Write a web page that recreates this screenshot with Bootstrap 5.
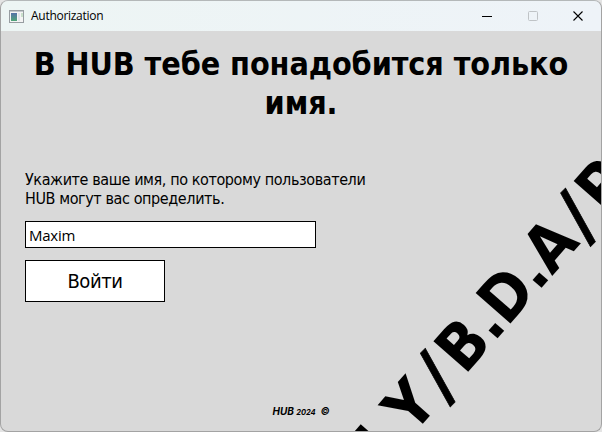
<!DOCTYPE html>
<html lang="ru">
<head>
<meta charset="utf-8">
<meta name="viewport" content="width=device-width, initial-scale=1">
<title>Authorization</title>
<link href="https://cdn.jsdelivr.net/npm/bootstrap@5.3.0/dist/css/bootstrap.min.css" rel="stylesheet">
<style>
html, body { height: 100%; }
body { background: #e4e4e4; color: #000; font-family: "DejaVu Sans Condensed", "DejaVu Sans", sans-serif; font-stretch: condensed; }
.app-window { height: 432px; border: 1px solid #a3a3a3; border-top-color: #b4b8b9; border-radius: 8px; background: #d9d9d9; }
.titlebar { height: 30px; background: linear-gradient(90deg, #edf5f4, #eef3f8); font: 12px/30px "Open Sans", sans-serif; padding-left: 8px; }
.titlebar .caption { margin-left: 7px; letter-spacing: -.28px; }
.win-btn { width: 45.5px; height: 30px; }
.headline { font-size: 32px; line-height: 39px; letter-spacing: -.08px; padding-top: 14px; }
.login { padding: 47px 0 0 24px; }
.hint { font-size: 16px; line-height: 19px; letter-spacing: -.4px; }
.name-field { width: 291px; height: 27px; margin-top: 13px; border: 1px solid #000; border-radius: 0; padding: 0 3px; color: #000; background: #fff; font: 15px/25px "Open Sans", sans-serif; letter-spacing: -.25px; }
.enter-btn { width: 140px; height: 42px; margin-top: 12px; border: 1px solid #000; border-radius: 0; background: #fff; color: #000; font-size: 20px; line-height: 40px; letter-spacing: -.4px; padding: 0; }
.footline { font: italic bold 10px/12px Inter, sans-serif; bottom: 12px; }
.footline .year { font-size: 7.5px; }
.watermark { font-weight: bold; font-size: 63.5px; }
.watermark .slash { font-size: 72px; stroke: #000; stroke-width: .6px; }
</style>
<script src="https://cdn.jsdelivr.net/npm/bootstrap@5.3.0/dist/js/bootstrap.bundle.min.js"></script>
</head>
<body class="m-0 overflow-hidden">
<div class="app-window position-relative overflow-hidden">
  <svg class="watermark position-absolute top-0 start-0" width="600" height="430" viewBox="1 1 600 430" aria-hidden="true">
    <g transform="translate(468.3 371.7) rotate(-48.8)">
      <text><tspan x="-153 -84.5">NY</tspan><tspan class="slash" x="-38" y="3" rotate="4">/</tspan><tspan y="0" x="-5.3 38.5 58.9 105.5 127">B.D.A</tspan><tspan class="slash" x="175" y="3" rotate="4">/</tspan><tspan x="207.7" y="0">P</tspan></text>
    </g>
  </svg>
  <header class="titlebar d-flex align-items-center position-relative">
    <svg width="15" height="13" viewBox="0 0 15 13">
      <defs><linearGradient id="ico" x1="0" y1="0" x2="0" y2="1"><stop offset="0" stop-color="#5572a8"/><stop offset="1" stop-color="#4fa577"/></linearGradient></defs>
      <rect x=".5" y=".5" width="14" height="12" fill="#f4f4f4" stroke="#979da1"/>
      <path d="M1 1.5h13" stroke="#c3c8cc"/>
      <rect x="2" y="3" width="6" height="8" fill="url(#ico)"/>
      <rect x="9" y="3" width="2" height="8" fill="#e0e5ea"/>
      <rect x="12" y="3" width="2" height="4" fill="#c9dfcb"/>
    </svg>
    <span class="caption flex-grow-1">Authorization</span>
    <span class="win-btn d-flex align-items-center justify-content-center"><svg width="10" height="10"><path d="M0 5.5h10" stroke="#000"/></svg></span>
    <span class="win-btn d-flex align-items-center justify-content-center"><svg width="10" height="10"><rect x=".5" y=".5" width="9" height="9" rx="1" fill="none" stroke="#bfc3c6"/></svg></span>
    <span class="win-btn d-flex align-items-center justify-content-center"><svg width="10" height="10"><path d="M.5 .5l9 9M9.5 .5l-9 9" stroke="#000" stroke-width="1.1"/></svg></span>
  </header>
  <main class="position-relative">
    <h1 class="headline fw-bold text-center m-0">В HUB тебе понадобится только<br>имя.</h1>
    <form class="login d-flex flex-column align-items-start">
      <label class="hint" for="username">Укажите ваше имя, по которому пользователи<br>HUB могут вас определить.</label>
      <input class="form-control name-field" id="username" type="text" value="Maxim">
      <button class="btn enter-btn" type="button">Войти</button>
    </form>
  </main>
  <footer class="footline position-absolute start-0 w-100 text-center">HUB <span class="year">2024</span>&nbsp; ©</footer>
</div>
</body>
</html>
